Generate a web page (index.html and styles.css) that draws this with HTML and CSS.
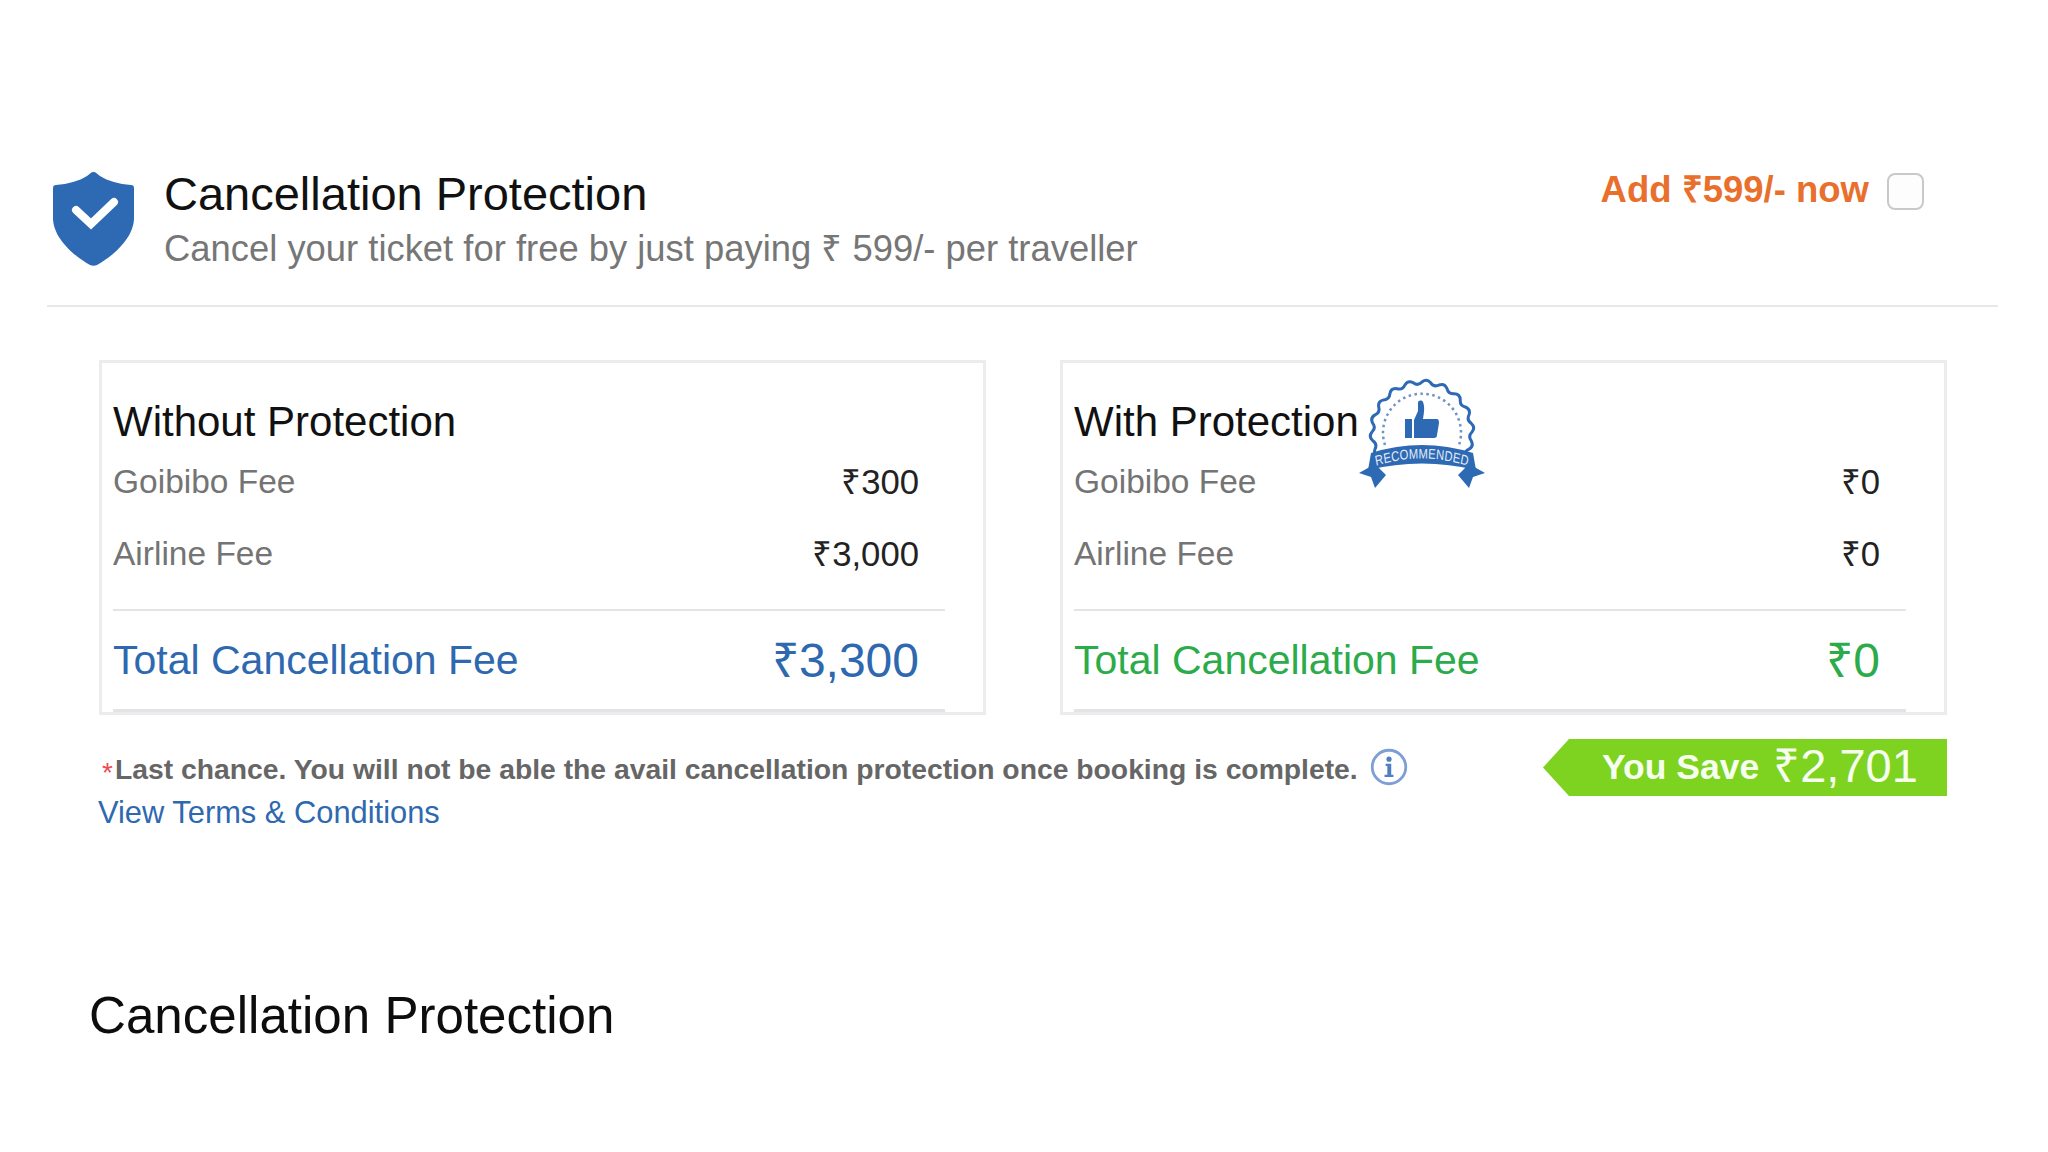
FILE: index.html
```html
<!DOCTYPE html>
<html lang="en">
<head>
<meta charset="utf-8">
<title>Cancellation Protection</title>
<link rel="stylesheet" href="styles.css">
</head>
<body>
<main class="slide">
  <header class="head">
    <svg class="shield" viewBox="0 0 81 94" aria-hidden="true">
      <path d="M40.500 0 C43 0 44 2 47 4 C55 9 66 12 78 13 C80 13 81 14 81 16 V46 C81 66 60 84 44 93 C42 94 39 94 37 93 C21 84 0 66 0 46 V16 C0 14 1 13 3 13 C15 12 26 9 34 4 C37 2 38 0 40.500 0 Z" fill="#2e69b4"/>
      <path d="M23 38 L38 52 L61 30" fill="none" stroke="#fff" stroke-width="8" stroke-linecap="round" stroke-linejoin="miter"/>
    </svg>
    <div class="head-text">
      <h1 class="title">Cancellation Protection</h1>
      <p class="sub">Cancel your ticket for free by just paying ₹ 599/- per traveller</p>
    </div>
    <div class="add">
      <span class="add-label">Add ₹599/- now</span>
      <span class="check"></span>
    </div>
  </header>

  <section class="cards">
    <article class="card">
      <h2 class="card-title">Without Protection</h2>
      <div class="row"><span>Goibibo Fee</span><span class="val">₹300</span></div>
      <div class="row row-b"><span>Airline Fee</span><span class="val">₹3,000</span></div>
      <div class="total blue"><span>Total Cancellation Fee</span><span class="sum">₹3,300</span></div>
    </article>
    <article class="card">
      <h2 class="card-title">With Protection</h2>
      <svg class="badge" viewBox="0 0 128 111" aria-hidden="true">
        <path d="M20.700 80 Q15.100 77.800 17 72.100 Q19.600 66.900 14.800 63.700 Q10.200 59.700 14 55 Q18.200 51 14.800 46.300 Q11.800 41 17 37.900 Q22.300 35.600 20.700 30 Q19.800 24 25.700 22.900 Q31.500 22.500 31.900 16.700 Q33 10.800 39 11.700 Q44.600 13.300 46.900 8 Q50 2.800 55.300 5.800 Q60 9.200 64 5 Q68.700 1.200 72.700 5.800 Q75.900 10.600 81.100 8 Q86.800 6.100 89 11.700 Q90.400 17.300 96.100 16.700 Q102.200 16.800 102.300 22.900 Q101.700 28.600 107.300 30 Q112.900 32.200 111 37.900 Q108.400 43.100 113.200 46.300 Q117.800 50.300 114 55 Q109.800 59 113.200 63.700 Q116.200 69 111 72.100 Q105.700 74.400 107.300 80 L100 78 H28 Z" fill="#fff" stroke="#2e69b4" stroke-width="3" stroke-linejoin="round"/>
        <path d="M27 68 A39 39 0 1 1 101 68" fill="none" stroke="#6f93c6" stroke-width="2.500" stroke-dasharray="2.500 3.500"/>
        <path d="M47 42 H54 V61 H47 Z M56 61 V43 L60 34 V26 C60 23 64 23 65 25 C67 30 66 36 65 42 H78 C81 42 81 44 81 46 L79 58 C79 60 78 61 76 61 Z" fill="#2e69b4"/>
        <path d="M17 87 L1 96 L13 100 L17 111 L28 98 Z" fill="#2e69b4"/>
        <path d="M111 87 L127 96 L115 100 L111 111 L100 98 Z" fill="#2e69b4"/>
        <path d="M13 76 Q64 60 115 76 L118 93 Q64 80 10 93 Z" fill="#2e69b4"/>
        <g class="badge-squeeze">
          <path id="badge-arc" d="M15 91 Q80 72 145 91" fill="none"/>
          <text class="badge-text"><textPath href="#badge-arc" startOffset="50%" text-anchor="middle">RECOMMENDED</textPath></text>
        </g>
      </svg>
      <div class="row"><span>Goibibo Fee</span><span class="val">₹0</span></div>
      <div class="row row-b"><span>Airline Fee</span><span class="val">₹0</span></div>
      <div class="total green"><span>Total Cancellation Fee</span><span class="sum">₹0</span></div>
    </article>
  </section>

  <section class="foot">
    <div class="notes">
      <p class="note"><span class="star">*</span><span>Last chance. You will not be able the avail cancellation protection once booking is complete.</span>
        <svg class="info" viewBox="0 0 34 34" aria-hidden="true">
          <circle cx="17" cy="17" r="15" fill="none" stroke="#7e9fd6" stroke-width="2.500"/>
          <path d="M14 14 H19 V24 H21 V26 H13 V24 H15.500 V16 H14 Z" fill="#4f7fc0"/>
          <circle cx="17" cy="10" r="2.300" fill="#4f7fc0"/>
        </svg>
      </p>
      <a class="terms" href="#">View Terms &amp; Conditions</a>
    </div>
    <div class="save"><span>You Save</span><span class="save-sum">₹2,701</span></div>
  </section>

  <h2 class="caption">Cancellation Protection</h2>
</main>
</body>
</html>
```
FILE: styles.css
```css
* { box-sizing: border-box; }
html, body { margin: 0; padding: 0; }
body { width: 2048px; height: 1152px; background: #fff; font-family: "Liberation Sans", Arial, sans-serif; overflow: hidden; }
h1, h2, p { margin: 0; font-weight: 400; }
.slide { display: flex; flex-direction: column; padding-top: 172px; height: 1152px; }

.head { display: flex; margin: 0 50px 0 47px; height: 135px; border-bottom: 2px solid #e8e8eb; align-items: flex-start; }
.shield { width: 81px; height: 94px; margin: 0 0 0 6px; flex: none; }
.head-text { margin-left: 30px; flex: 1; }
.title { font-size: 47px; line-height: 50px; margin-top: -3px; color: #111; }
.sub { font-size: 36.400px; line-height: 40px; margin-top: 10px; color: #767676; }
.add { display: flex; align-items: center; gap: 18px; margin-right: 74px; margin-top: -1px; }
.add-label { font-size: 36.500px; line-height: 44px; font-weight: 700; color: #e8702c; margin-top: -3px; }
.check { width: 37px; height: 37px; border: 2px solid #c9c9cd; border-radius: 8px; background: #fdfdfd; }

.cards { display: flex; gap: 74px; margin: 53px 101px 0 99px; }
.card { position: relative; flex: 1; height: 355px; border: 3px solid #ececef; padding: 36px 11px 0 11px; }
.card-title { font-size: 42px; line-height: 46px; color: #111; }
.row { display: flex; justify-content: space-between; width: 832px; padding: 0 26px 0 0; font-size: 33.500px; line-height: 40px; color: #747474; margin-top: 17px; }
.val { font-size: 34.700px; color: #222; }
.row-b { margin-top: 32px; }
.total { display: flex; justify-content: space-between; align-items: center; width: 832px; border-top: 2px solid #e4e4e6; border-bottom: 3px solid #e4e4e6; margin-top: 35px; padding: 0 26px 0 0; height: 103px; font-size: 41px; }
.sum { font-size: 48px; margin-top: -4px; }
.blue { color: #2e69b0; }
.green { color: #2cab4a; }
.badge { position: absolute; left: 295px; top: 14px; width: 128px; height: 111px; }
.badge-squeeze { transform: scale(.8, 1); }
.badge-text { font-family: "Liberation Sans", sans-serif; font-size: 14px; letter-spacing: .3px; fill: #e3ecf7; }

.foot { display: flex; justify-content: space-between; margin: 24px 101px 0 98px; align-items: flex-start; }
.note { display: flex; align-items: center; gap: 12px; font-size: 28.300px; line-height: 36px; font-weight: 700; color: #666; margin-top: 8px; white-space: nowrap; }
.star { color: #ee4b55; font-weight: 400; font-size: 28px; width: 15px; margin-right: -10px; margin-top: 8px; text-align: right; }
.info { width: 38px; height: 38px; flex: none; margin-top: -4px; }
.terms { display: block; margin-top: 2px; font-size: 30.850px; line-height: 40px; color: #2e69b0; text-decoration: none; }
.save { display: flex; align-items: center; gap: 14px; width: 404px; height: 57px; padding-left: 59px; background: #7ed321; color: #f6fff0; font-size: 35.500px; font-weight: 700; clip-path: polygon(26px 0, 100% 0, 100% 100%, 26px 100%, 0 50%); }
.save-sum { font-size: 47px; font-weight: 400; margin-top: -8px; }

.caption { font-size: 51.100px; line-height: 62px; color: #0d0d0d; margin: 152px 0 0 89px; }
```
